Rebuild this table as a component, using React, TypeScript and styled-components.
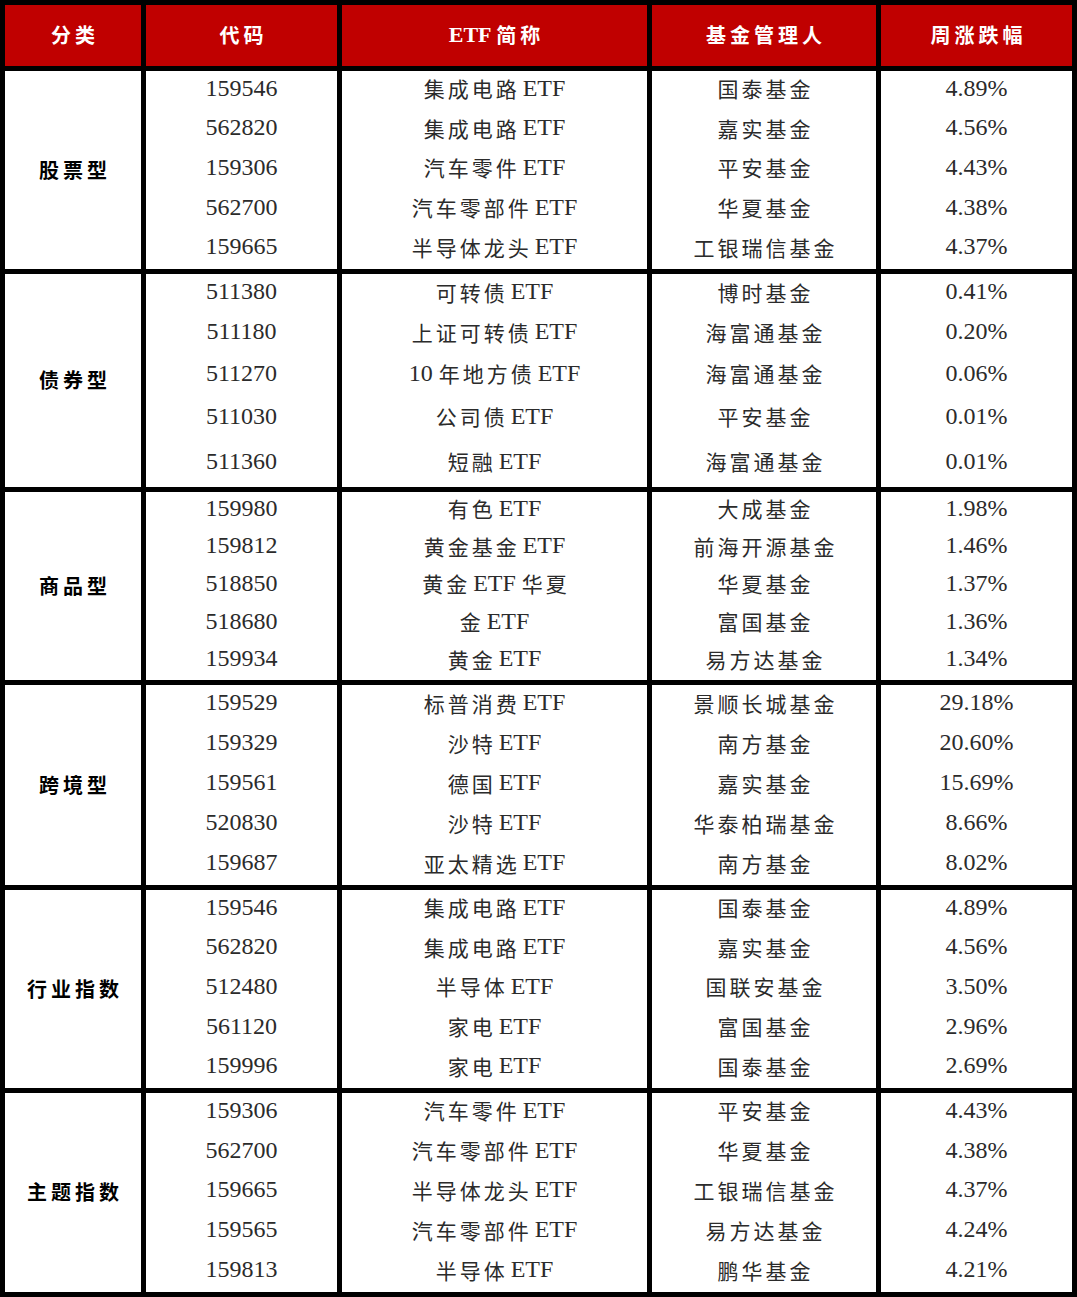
import React from 'react'
import styled, { createGlobalStyle } from 'styled-components'

const GlobalStyle = createGlobalStyle`
  html, body {
    margin: 0;
    padding: 0;
    background: #ffffff;
  }
`

const Table = styled.div`
  display: grid;
  grid-template-columns: 136px 191px 305px 224px 191px;
  grid-template-rows: 61px 198px 213px 188px 200px 198px 199px;
  gap: 5px;
  padding: 5px;
  width: 1077px;
  box-sizing: border-box;
  background: #000000;
  font-family: 'Liberation Serif', 'Noto Sans CJK SC', serif;
`

const HeaderCell = styled.div`
  display: flex;
  align-items: center;
  justify-content: center;
  background: #c00000;
  color: #ffffff;
  font-family: 'Liberation Serif', 'Noto Sans CJK SC', serif;
  font-weight: 700;
  font-size: 22px;
  white-space: pre;
  padding-bottom: 2px;
`

const HeadHan = styled.span`
  font-size: 20px;
  letter-spacing: 4px;
`

const CategoryCell = styled.div`
  display: flex;
  align-items: center;
  justify-content: center;
  background: #ffffff;
  color: #000000;
  font-family: 'Noto Sans CJK SC', sans-serif;
  font-weight: 700;
  font-size: 20px;
  letter-spacing: 4px;
  padding-left: 4px;
  padding-bottom: 2px;
`

const ColumnCell = styled.div<{ $rows: string }>`
  display: grid;
  grid-template-rows: ${(p) => p.$rows};
  background: #ffffff;
  color: #2b2b2b;
  font-size: 24px;
`

const Line = styled.div`
  display: flex;
  align-items: center;
  justify-content: center;
  white-space: pre;
  padding-bottom: 5px;
`

const Han = styled.span`
  font-family: 'Noto Sans CJK SC', sans-serif;
  font-size: 21px;
  letter-spacing: 3px;
`

// last character of a Han run carries no trailing spacing
const LastChar = styled.span`
  letter-spacing: 0;
`

const splitHan = (text: string) =>
  text.split(/([\u4e00-\u9fff]+)/).filter(Boolean)

const Mixed = ({ text, Wrap }: { text: string; Wrap: typeof Han | typeof HeadHan }) => (
  <>
    {splitHan(text).map((part, i) =>
      /[\u4e00-\u9fff]/.test(part) ? (
        <Wrap key={i}>
          {part.slice(0, -1)}
          <LastChar>{part.slice(-1)}</LastChar>
        </Wrap>
      ) : (
        <span key={i}>{part}</span>
      )
    )}
  </>
)

type Fund = [string, string, string, string]

const groups: { label: string; rows: string; funds: Fund[] }[] = [
  {
    label: '股票型',
    rows: 'repeat(5, 1fr)',
    funds: [
      ['159546', '集成电路 ETF', '国泰基金', '4.89%'],
      ['562820', '集成电路 ETF', '嘉实基金', '4.56%'],
      ['159306', '汽车零件 ETF', '平安基金', '4.43%'],
      ['562700', '汽车零部件 ETF', '华夏基金', '4.38%'],
      ['159665', '半导体龙头 ETF', '工银瑞信基金', '4.37%'],
    ],
  },
  {
    label: '债券型',
    rows: '40px 40px 43px 43px 47px',
    funds: [
      ['511380', '可转债 ETF', '博时基金', '0.41%'],
      ['511180', '上证可转债 ETF', '海富通基金', '0.20%'],
      ['511270', '10 年地方债 ETF', '海富通基金', '0.06%'],
      ['511030', '公司债 ETF', '平安基金', '0.01%'],
      ['511360', '短融 ETF', '海富通基金', '0.01%'],
    ],
  },
  {
    label: '商品型',
    rows: 'repeat(5, 1fr)',
    funds: [
      ['159980', '有色 ETF', '大成基金', '1.98%'],
      ['159812', '黄金基金 ETF', '前海开源基金', '1.46%'],
      ['518850', '黄金 ETF 华夏', '华夏基金', '1.37%'],
      ['518680', '金 ETF', '富国基金', '1.36%'],
      ['159934', '黄金 ETF', '易方达基金', '1.34%'],
    ],
  },
  {
    label: '跨境型',
    rows: 'repeat(5, 1fr)',
    funds: [
      ['159529', '标普消费 ETF', '景顺长城基金', '29.18%'],
      ['159329', '沙特 ETF', '南方基金', '20.60%'],
      ['159561', '德国 ETF', '嘉实基金', '15.69%'],
      ['520830', '沙特 ETF', '华泰柏瑞基金', '8.66%'],
      ['159687', '亚太精选 ETF', '南方基金', '8.02%'],
    ],
  },
  {
    label: '行业指数',
    rows: 'repeat(5, 1fr)',
    funds: [
      ['159546', '集成电路 ETF', '国泰基金', '4.89%'],
      ['562820', '集成电路 ETF', '嘉实基金', '4.56%'],
      ['512480', '半导体 ETF', '国联安基金', '3.50%'],
      ['561120', '家电 ETF', '富国基金', '2.96%'],
      ['159996', '家电 ETF', '国泰基金', '2.69%'],
    ],
  },
  {
    label: '主题指数',
    rows: 'repeat(5, 1fr)',
    funds: [
      ['159306', '汽车零件 ETF', '平安基金', '4.43%'],
      ['562700', '汽车零部件 ETF', '华夏基金', '4.38%'],
      ['159665', '半导体龙头 ETF', '工银瑞信基金', '4.37%'],
      ['159565', '汽车零部件 ETF', '易方达基金', '4.24%'],
      ['159813', '半导体 ETF', '鹏华基金', '4.21%'],
    ],
  },
]

const headers = ['分类', '代码', 'ETF 简称', '基金管理人', '周涨跌幅']

const App = () => (
  <>
    <GlobalStyle />
    <Table>
      {headers.map((h) => (
        <HeaderCell key={h}>
          <Mixed text={h} Wrap={HeadHan} />
        </HeaderCell>
      ))}

      {groups.map((g) => (
        <React.Fragment key={g.label}>
          <CategoryCell>{g.label}</CategoryCell>
          {[0, 1, 2, 3].map((col) => (
            <ColumnCell key={col} $rows={g.rows}>
              {g.funds.map((f, i) => (
                <Line key={i}>
                  <Mixed text={f[col]} Wrap={Han} />
                </Line>
              ))}
            </ColumnCell>
          ))}
        </React.Fragment>
      ))}
    </Table>
  </>
)

export default App
